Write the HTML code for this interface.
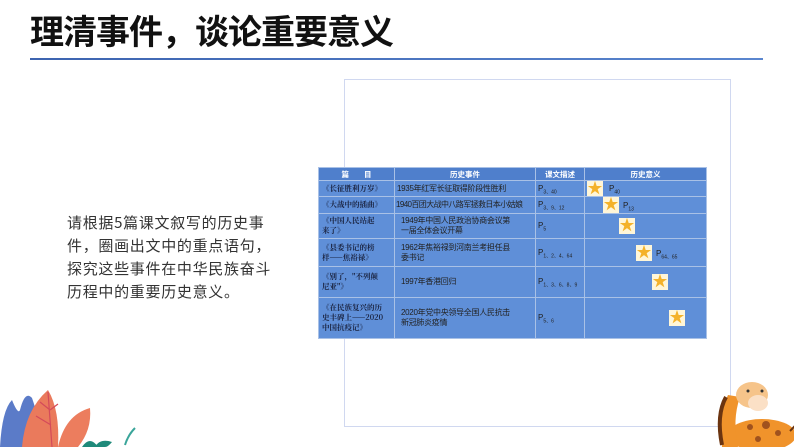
<!DOCTYPE html>
<html><head><meta charset="utf-8"><style>
*{margin:0;padding:0;box-sizing:border-box}
body{width:794px;height:447px;position:relative;overflow:hidden;background:#fff;font-family:"Liberation Sans","Noto Sans CJK SC",sans-serif}
.title{position:absolute;left:30px;top:5px;font-size:34px;font-weight:bold;color:#111;font-family:"Noto Sans CJK SC",sans-serif;letter-spacing:-1px}
.line{position:absolute;left:30px;top:58px;width:733px;height:2px;background:linear-gradient(90deg,#3d64b0,#5a86cf)}
.frame{position:absolute;left:344px;top:79px;width:387px;height:348px;border:1.5px solid #d0d8f0}
.txt{position:absolute;left:67px;top:211px;font-size:15px;line-height:23px;color:#333;letter-spacing:0.7px;font-family:"Noto Sans CJK SC",sans-serif}
table{position:absolute;left:318px;top:167px;border-collapse:collapse;font-size:8px;color:#222;line-height:10px;table-layout:fixed;width:388px}
td{border:1px solid #a9c1e6;background:#5f8fd8;padding:0 2px;vertical-align:middle;white-space:nowrap;overflow:hidden}
th{border:1px solid #a9c1e6;background:#4f7fcc;color:#fff;font-size:7.5px;height:13px;line-height:11px}
.c1{font-family:"Noto Serif CJK SC",serif;font-weight:bold;font-size:7.5px;line-height:10px;color:#1a2340;white-space:normal;padding:0 3px}
.c2{padding-left:6px;letter-spacing:-0.3px}
.c4{position:relative}
.star{position:absolute;top:50%;margin-top:-8px;width:16px;height:16px;background:#fff6d8;font-size:15px;line-height:16px;text-align:center;color:#f4b22a}
sub{font-size:5px;line-height:0}
</style></head><body>
<div class="title">理清事件，谈论重要意义</div>
<div class="line"></div>
<div class="frame"></div>
<div class="txt">请根据5篇课文叙写的历史事<br>件，圈画出文中的重点语句，<br>探究这些事件在中华民族奋斗<br>历程中的重要历史意义。</div>
<table>
<colgroup><col style="width:76px"><col style="width:141px"><col style="width:49px"><col style="width:122px"></colgroup>
<tr><th>篇　　目</th><th>历史事件</th><th>课文描述</th><th>历史意义</th></tr>
<tr style="height:16px"><td class="c1" style="white-space:nowrap">《长征胜利万岁》</td><td class="c2" style="padding-left:2px">1935年红军长征取得阶段性胜利</td><td>P<sub>3、40</sub></td><td class="c4"><span class="star" style="left:2px">★</span><span style="position:absolute;left:24px;top:3px">P<sub>40</sub></span></td></tr>
<tr style="height:17px"><td class="c1" style="white-space:nowrap">《大战中的插曲》</td><td class="c2" style="padding-left:1px;letter-spacing:-0.6px">1940百团大战中八路军拯救日本小姑娘</td><td>P<sub>3、9、12</sub></td><td class="c4"><span class="star" style="left:18px">★</span><span style="position:absolute;left:38px;top:4px">P<sub>13</sub></span></td></tr>
<tr style="height:25px"><td class="c1">《中国人民站起<br>来了》</td><td class="c2">1949年中国人民政治协商会议第<br>一届全体会议开幕</td><td>P<sub>5</sub></td><td class="c4"><span class="star" style="left:34px">★</span></td></tr>
<tr style="height:28px"><td class="c1">《县委书记的榜<br>样——焦裕禄》</td><td class="c2">1962年焦裕禄到河南兰考担任县<br>委书记</td><td>P<sub>1、2、4、64</sub></td><td class="c4"><span class="star" style="left:51px">★</span><span style="position:absolute;left:71px;top:10px">P<sub>64、65</sub></span></td></tr>
<tr style="height:31px"><td class="c1">《别了，"不列颠<br>尼亚"》</td><td class="c2">1997年香港回归</td><td>P<sub>1、3、6、8、9</sub></td><td class="c4"><span class="star" style="left:67px">★</span></td></tr>
<tr style="height:41px"><td class="c1">《在民族复兴的历<br>史丰碑上——2020<br>中国抗疫记》</td><td class="c2">2020年党中央领导全国人民抗击<br>新冠肺炎疫情</td><td>P<sub>5、6</sub></td><td class="c4"><span class="star" style="left:84px">★</span></td></tr>
</table>
<svg style="position:absolute;left:0;top:380px" width="160" height="67">
<path d="M0 67 Q2 30 12 20 Q18 35 20 30 Q25 10 32 18 Q40 40 40 67Z" fill="#5b7bc8"/>
<path d="M22 67 Q25 30 48 10 Q60 30 58 67Z" fill="#ea7a5c"/>
<path d="M48 12 L52 67 M50 30 L40 22 M51 45 L36 36 M50 30 L58 24" stroke="#d44a5a" stroke-width="1.2" fill="none"/>
<path d="M58 67 Q65 35 90 28 Q92 50 78 67Z" fill="#ec7d5e"/>
<path d="M82 67 Q90 55 98 67Z M95 67 Q100 58 112 62 Q108 67 105 67Z" fill="#1f8a7a"/>
<path d="M125 65 Q128 55 135 48" stroke="#3aa59a" stroke-width="2" fill="none"/>
</svg>
<svg style="position:absolute;left:700px;top:375px" width="94" height="72">
<ellipse cx="62" cy="60" rx="34" ry="16" fill="#f0932b"/>
<path d="M22 72 Q18 40 28 20 L40 22 Q32 45 38 72Z" fill="#f0932b"/>
<path d="M22 70 Q16 40 26 22" stroke="#6b3410" stroke-width="4" fill="none"/>
<ellipse cx="52" cy="20" rx="16" ry="13" fill="#f6c48a"/>
<ellipse cx="58" cy="28" rx="10" ry="8" fill="#fbe0c6"/>
<circle cx="48" cy="16" r="1.5" fill="#333"/><circle cx="62" cy="16" r="1.5" fill="#333"/>
<circle cx="50" cy="52" r="3" fill="#a0521e"/><circle cx="66" cy="50" r="4" fill="#a0521e"/><circle cx="78" cy="58" r="3" fill="#a0521e"/><circle cx="58" cy="64" r="3" fill="#a0521e"/>
<path d="M90 56 Q96 50 100 45" stroke="#6b3410" stroke-width="2" fill="none"/>
</svg>
</body></html>
